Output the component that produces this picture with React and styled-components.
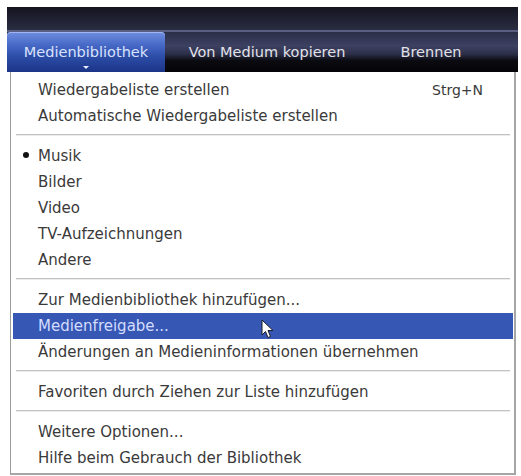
import React from "react";
import styled, { createGlobalStyle } from "styled-components";

const Global = createGlobalStyle`
  html, body { margin: 0; padding: 0; background: #ffffff; }
  body { font-family: "DejaVu Sans", Verdana, sans-serif; }
`;

const Page = styled.div`
  width: 521px;
  height: 476px;
  padding: 7px 3px 0 7px;
  box-sizing: border-box;
  position: relative;
  overflow: hidden;
`;

const Bar = styled.div`
  height: 65px;
  display: flex;
  flex-direction: column;
`;

const BarTop = styled.div`
  height: 23px;
  border-bottom: 2px solid #5a5e80;
  background: linear-gradient(to bottom, #141520, #2a2c42);
`;

const Tabs = styled.div`
  flex: 1;
  display: flex;
  align-items: stretch;
  background: linear-gradient(to bottom, #2b2e47 0%, #3d4162 35%, #2c2f48 55%, #0a0a10 72%, #050508 100%);
`;

const Tab = styled.div`
  position: relative;
  width: ${(p) => p.$w}px;
  margin-left: ${(p) => p.$ml || 0}px;
  display: flex;
  align-items: center;
  justify-content: center;
  font-size: 14.5px;
  color: ${(p) => (p.$active ? "#d8e2ff" : "#e2e2e8")};
  border-radius: ${(p) => (p.$active ? "4px 4px 0 0" : "0")};
  background: ${(p) =>
    p.$active
      ? "linear-gradient(to bottom, #6f8ee0 0%, #4a6cc9 30%, #2d4ea8 60%, #1b3488 100%)"
      : "transparent"};
  box-shadow: ${(p) => (p.$active ? "inset 0 1px 0 #9fb4f0" : "none")};
`;

const Caret = styled.span`
  position: absolute;
  bottom: 3px;
  left: 50%;
  margin-left: -3px;
  width: 0;
  height: 0;
  border-left: 3px solid transparent;
  border-right: 3px solid transparent;
  border-top: 3px solid #e8f0ff;
`;

const Menu = styled.div`
  margin-left: 3px;
  width: 506px;
  box-sizing: border-box;
  padding: 5px 0 2px 0;
  background: #ffffff;
  border-left: 1px solid #9c9c9c;
  border-right: 2px solid #a6a6a6;
  border-bottom: 2px solid #a6a6a6;
`;

const Item = styled.div`
  position: relative;
  height: 26px;
  display: flex;
  align-items: center;
  justify-content: space-between;
  margin: 0 1px 0 2px;
  padding: 0 30px 0 25px;
  font-size: 15px;
  color: ${(p) => (p.$hl ? "#d4dcff" : "#3a3a3a")};
  background: ${(p) => (p.$hl ? "#3658b4" : "transparent")};
`;

const Bullet = styled.span`
  position: absolute;
  left: 10px;
  top: 50%;
  width: 6px;
  height: 6px;
  margin-top: -4px;
  border-radius: 50%;
  background: #111;
`;

const Shortcut = styled.span`
  color: #3a3a3a;
  font-size: 14px;
`;

const Sep = styled.div`
  height: 1px;
  margin: 5px 4px 7px 5px;
  background: #c2c2c2;
  border-bottom: 1px solid #ececec;
`;

const Cursor = styled.svg`
  position: absolute;
  left: 261px;
  top: 319px;
`;

export default function App() {
  return (
    <Page>
      <Global />
      <Bar>
        <BarTop />
        <Tabs>
          <Tab $active $w={158}>
            Medienbibliothek
            <Caret />
          </Tab>
          <Tab $w={160} $ml={22}>Von Medium kopieren</Tab>
          <Tab $w={76} $ml={46}>Brennen</Tab>
        </Tabs>
      </Bar>
      <Menu>
        <Item>
          <span>Wiedergabeliste erstellen</span>
          <Shortcut>Strg+N</Shortcut>
        </Item>
        <Item>Automatische Wiedergabeliste erstellen</Item>
        <Sep />
        <Item>
          <Bullet />
          Musik
        </Item>
        <Item>Bilder</Item>
        <Item>Video</Item>
        <Item>TV-Aufzeichnungen</Item>
        <Item>Andere</Item>
        <Sep />
        <Item>Zur Medienbibliothek hinzufügen...</Item>
        <Item $hl>Medienfreigabe...</Item>
        <Item>Änderungen an Medieninformationen übernehmen</Item>
        <Sep />
        <Item>Favoriten durch Ziehen zur Liste hinzufügen</Item>
        <Sep />
        <Item>Weitere Optionen...</Item>
        <Item>Hilfe beim Gebrauch der Bibliothek</Item>
      </Menu>
      <Cursor width="14" height="22" viewBox="0 0 14 22">
        <path d="M1 1 L1 16 L4.5 12.5 L7 18.5 L9.5 17.5 L7 11.5 L12 11.5 Z" fill="#ffffff" stroke="#1a1a2a" strokeWidth="1" strokeLinejoin="round" />
      </Cursor>
    </Page>
  );
}
